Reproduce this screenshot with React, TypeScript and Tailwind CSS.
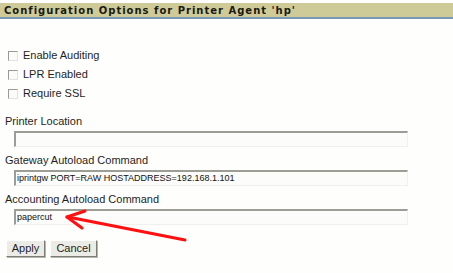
import React from "react";

function Checkbox({ label }: { label: string }) {
  return (
    <div className="flex h-[19px] items-center">
      <span className="ml-[8px] box-border block h-[10px] w-[10px] border border-t-[#9a9a94] border-l-[#9a9a94] border-r-[#e4e4de] border-b-[#e4e4de] bg-[#fbfbf9]" />
      <span className="ml-[5px] text-[11px] leading-none text-[#1e1e1e]">{label}</span>
    </div>
  );
}

function Field({ value }: { value?: string }) {
  return (
    <div className="ml-[14px] box-border flex h-[16px] w-[394px] items-center border-t-2 border-l-2 border-r border-b border-t-[#9c9d95] border-l-[#9c9d95] border-r-[#f0f0ec] border-b-[#f0f0ec] bg-[#fcfcfa] pl-[1px] text-[9px] leading-none text-[#111]">
      {value}
    </div>
  );
}

function Btn({ label, w }: { label: string; w: string }) {
  return (
    <button
      className={`box-border flex h-[17px] ${w} items-center justify-center border border-t-[#ffffff] border-l-[#ffffff] border-r-[#7d7d77] border-b-[#7d7d77] bg-[#ecece6] text-[11px] leading-none text-[#1e1e1e] shadow-[1px_1px_0_#b5b5ae]`}
    >
      {label}
    </button>
  );
}

export default function App() {
  return (
    <div
      className="relative h-[273px] w-[453px] overflow-hidden bg-[#fefefd] pt-[3px]"
      style={{ fontFamily: '"Liberation Sans", Arial, sans-serif' }}
    >
      <div
        className="box-border flex h-[16px] items-center border-b-2 border-[#7898b6] bg-[#cfcb98] pl-[4px] text-[10px] font-bold tracking-[1px] text-[#1a1a12]"
        style={{ fontFamily: '"DejaVu Sans", sans-serif' }}
      >
        Configuration Options for Printer Agent 'hp'
      </div>

      <div className="mt-[27px]">
        <Checkbox label="Enable Auditing" />
        <Checkbox label="LPR Enabled" />
        <Checkbox label="Require SSL" />
      </div>

      <div className="mt-[13px] pl-[5px] text-[11px] leading-none text-[#1e1e1e]">Printer Location</div>
      <div className="mt-[4px]">
        <Field />
      </div>
      <div className="mt-[8px] pl-[5px] text-[11px] leading-none text-[#1e1e1e]">Gateway Autoload Command</div>
      <div className="mt-[4px]">
        <Field value="iprintgw PORT=RAW HOSTADDRESS=192.168.1.101" />
      </div>
      <div className="mt-[8px] pl-[5px] text-[11px] leading-none text-[#1e1e1e]">Accounting Autoload Command</div>
      <div className="mt-[4px]">
        <Field value="papercut" />
      </div>

      <div className="mt-[15px] flex gap-[5px] pl-[6px]">
        <Btn label="Apply" w="w-[39px]" />
        <Btn label="Cancel" w="w-[47px]" />
      </div>

      <svg className="absolute left-0 top-0" width="453" height="273" viewBox="0 0 453 273">
        <g stroke="#ff1010" strokeWidth="3" strokeLinecap="round" fill="none">
          <line x1="185" y1="240" x2="68" y2="217" />
          <line x1="67" y1="217" x2="85" y2="211" />
          <line x1="67" y1="217" x2="82" y2="228" />
        </g>
      </svg>
    </div>
  );
}
